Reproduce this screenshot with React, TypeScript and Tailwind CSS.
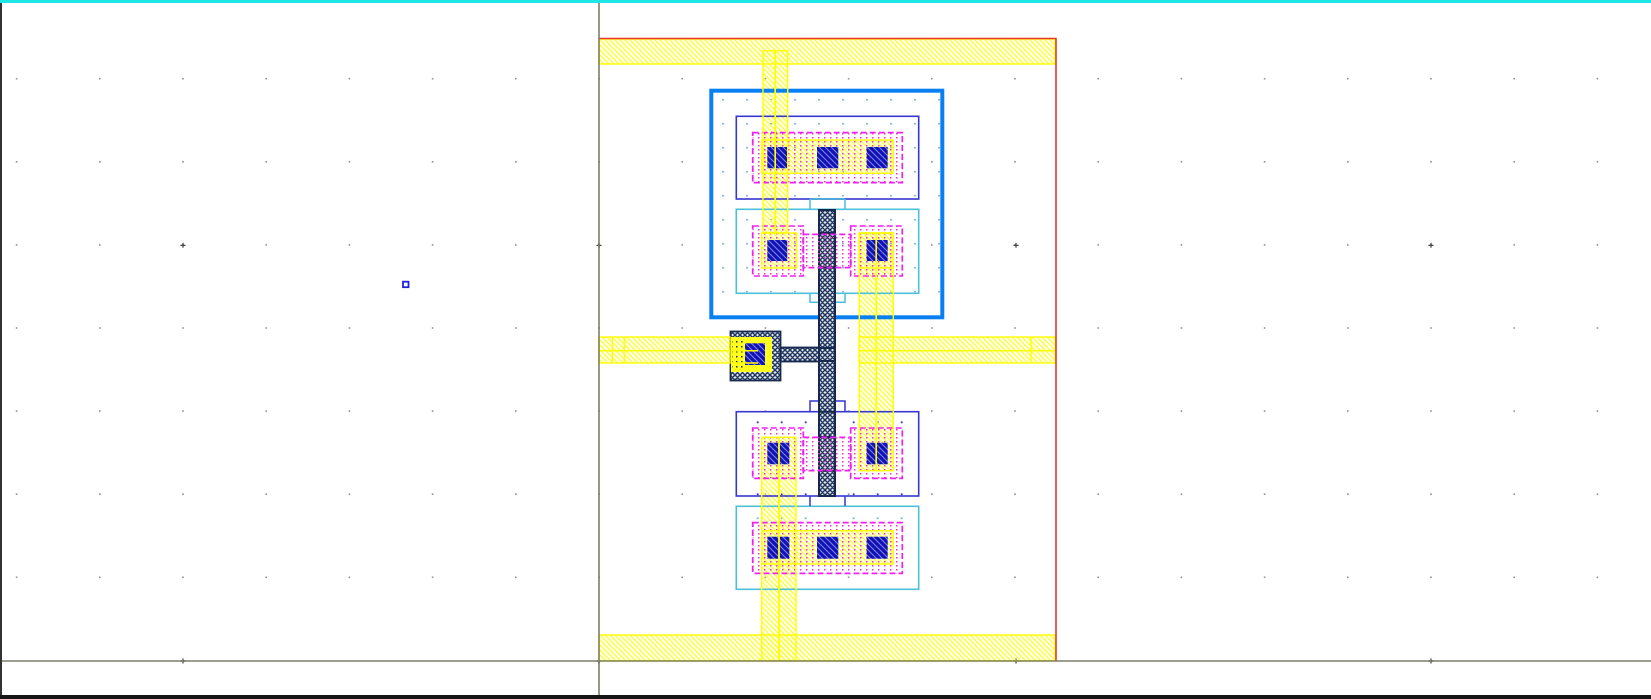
const gridXs = Array.from({ length: 20 }, (_, i) => 16.6 + i * 83.2);
const gridYs = Array.from({ length: 7 }, (_, i) => 78.7 + i * 83.1);
const crossXs = [183, 599, 1016, 1431];
const crossYs = [245.3, 661];

const wellXs = [723, 747, 771, 795, 819, 843, 867, 891, 915, 939];
const wellYs = [99.7, 123.7, 147.7, 171.7, 195.7, 219.7, 243.7, 267.7, 291.7];

type R = [number, number, number, number];

const contacts: R[] = [
  [767.3, 147, 20, 21.3],
  [817, 147, 21.3, 21.3],
  [866.7, 147, 21, 21.3],
  [767.3, 240, 20, 21],
  [866.7, 240, 21, 21],
  [767.3, 442.7, 22, 21.6],
  [866.7, 442.7, 21, 21.6],
  [767.3, 536.7, 22, 22],
  [817, 536.7, 21.3, 22],
  [866.7, 536.7, 21, 22],
];

const diffusion: R[] = [
  [752.7, 132.7, 149.6, 50],
  [752.7, 226, 50.6, 50],
  [850.7, 226, 51.6, 50],
  [803.3, 234.3, 47.4, 33.4],
  [752.7, 428, 50.6, 50.3],
  [850.7, 428, 51.6, 50.3],
  [803.3, 437.3, 47.4, 33.4],
  [752.7, 522.7, 149.6, 50.6],
];

const metal: R[] = [
  [599, 39, 456, 25],
  [599, 635, 456, 25.7],
  [599, 337, 131, 26],
  [859.3, 337, 196, 26],
  [763, 50.7, 12.3, 182],
  [775.3, 50.7, 12.4, 182],
  [859.3, 233, 17, 237.7],
  [876.3, 233, 17, 237.7],
  [761.7, 437.3, 17.3, 223.3],
  [779, 437.3, 17, 223.3],
  [761.7, 140, 131.6, 33.3],
  [761.7, 233, 35, 35],
  [859.3, 233, 34, 35],
  [761.7, 530.7, 131.6, 33.3],
];

function Box({ r, ...rest }: { r: R } & React.SVGProps<SVGRectElement>) {
  return <rect x={r[0]} y={r[1]} width={r[2]} height={r[3]} {...rest} />;
}

function Layout() {
  return (
    <svg width="1649" height="692" viewBox="2 3 1649 692" className="block blur-[0.4px]">
      <defs>
        <pattern id="metal" width="5" height="5" patternUnits="userSpaceOnUse">
          <path d="M-1 -1L6 6M-1 4L1 6M4 -1L6 1" stroke="#ffff30" strokeWidth="1.4" />
        </pattern>
        <pattern id="contact" width="6" height="6" patternUnits="userSpaceOnUse">
          <rect width="6" height="6" fill="#1212b4" />
          <path d="M-1 -1L7 7M-1 5L1 7M5 -1L7 1" stroke="#7a82e8" strokeWidth="1.1" />
        </pattern>
        <pattern id="diff" width="6" height="8" patternUnits="userSpaceOnUse">
          <rect x="2" y="1" width="1.5" height="1.5" fill="#f030c8" />
          <rect x="2" y="5" width="1.5" height="1.5" fill="#f030c8" />
        </pattern>
        <pattern id="blackDots" width="5" height="5" patternUnits="userSpaceOnUse">
          <rect x="1" y="1" width="1.5" height="1.5" fill="#2b2b30" />
        </pattern>
        <pattern id="poly" width="5" height="5" patternUnits="userSpaceOnUse">
          <rect width="5" height="5" fill="#e6e9ee" />
          <path d="M-1 -1L6 6M-1 4L1 6M4 -1L6 1M6 -1L-1 6M1 -1L-1 1M6 4L4 6" stroke="#22375f" strokeWidth="1.5" />
        </pattern>
      </defs>

      {/* grid */}
      {gridXs.map((x) =>
        gridYs.map((y) => <rect key={`${x}-${y}`} x={x - 0.8} y={y - 0.8} width="1.6" height="1.6" fill="#909090" />),
      )}
      {crossXs.map((x) =>
        crossYs.map((y) => (
          <path key={`${x}-${y}`} d={`M${x - 2.5} ${y}H${x + 2.5}M${x} ${y - 2.5}V${y + 2.5}`} stroke="#444" strokeWidth="1.2" />
        )),
      )}

      {/* well dots */}
      {wellXs.map((x) =>
        wellYs.map((y) => <rect key={`${x}-${y}`} x={x - 0.8} y={y - 0.8} width="1.6" height="1.6" fill="#6aa5e4" />),
      )}
      {[757.7, 781.7, 805.7, 853.7, 877.7, 901.7].map((x) => (
        <g key={x}>
          <rect x={x - 0.9} y="421.4" width="1.8" height="1.8" fill="#2f2fc8" />
          <rect x={x - 0.9} y="493.4" width="1.8" height="1.8" fill="#2f2fc8" />
          <rect x={x - 0.9} y="517.4" width="1.8" height="1.8" fill="#5cc4da" />
        </g>
      ))}

      {/* metal fill */}
      {metal.map((r) => (
        <Box key={r.join()} r={r} fill="url(#metal)" />
      ))}

      {/* well + active boxes */}
      <Box r={[711.3, 90.7, 231, 226.6]} fill="none" stroke="#0a7ff2" strokeWidth="4" />
      <Box r={[736.3, 116.3, 182.4, 82.7]} fill="none" stroke="#3636d2" strokeWidth="1.6" />
      <Box r={[736.3, 209.3, 182.4, 84]} fill="none" stroke="#4cc0d8" strokeWidth="1.6" />
      <Box r={[736.3, 411.7, 182.4, 84.3]} fill="none" stroke="#3636d2" strokeWidth="1.6" />
      <Box r={[736.3, 506.3, 182.4, 83]} fill="none" stroke="#4cc0d8" strokeWidth="1.6" />
      <path d="M810 199V209.3M845 199V209.3M810 199H845" fill="none" stroke="#4cc0d8" strokeWidth="1.5" />
      <path d="M810 293.3V302.3H845V293.3" fill="none" stroke="#4cc0d8" strokeWidth="1.5" />
      <path d="M810 411.7V401H845V411.7" fill="none" stroke="#3636d2" strokeWidth="1.5" />
      <path d="M810 496V506M845 496V506" fill="none" stroke="#3636d2" strokeWidth="1.5" />

      {/* poly */}
      <Box r={[730.5, 331.5, 50, 49]} fill="url(#poly)" stroke="#16284e" strokeWidth="1.8" />
      <Box r={[780.5, 347.5, 54, 14]} fill="url(#poly)" stroke="#16284e" strokeWidth="1.8" />
      <Box r={[819, 210, 16, 286]} fill="url(#poly)" stroke="#16284e" strokeWidth="2" />
      <path
        d="M819 233H835M819 267.5H835M819 437H835M819 470.7H835M819 348H835M819 361H835M819 411.7H835"
        stroke="#16284e"
        strokeWidth="2"
      />

      {/* gate contact */}
      <rect x="731" y="337" width="41" height="35" fill="#ffff20" />
      <rect x="732" y="338" width="13" height="33" fill="url(#blackDots)" />
      <rect x="745" y="343.3" width="20" height="21.7" fill="url(#contact)" />
      <path d="M732 350.7H758M732 363H758" stroke="#ffff00" strokeWidth="1.4" />

      {/* diffusion */}
      {diffusion.map((r) => (
        <g key={r.join()}>
          <Box r={r} fill="url(#diff)" />
          <Box r={r} fill="none" stroke="#ee22ee" strokeWidth="1.7" strokeDasharray="6 3" />
        </g>
      ))}

      {/* contacts */}
      {contacts.map((r) => (
        <Box key={r.join()} r={r} fill="url(#contact)" />
      ))}

      {/* metal outlines */}
      {metal.map((r) => (
        <Box key={r.join()} r={r} fill="none" stroke="#ffff00" strokeWidth="1.4" />
      ))}
      <path d="M612.3 337V363M624.3 337V363M1031 337V363M599 350.7H730M859.3 350.7H1055" stroke="#ffff00" strokeWidth="1.4" />

      {/* cell boundary */}
      <path d="M599 38.5H1056V661" fill="none" stroke="#e8362c" strokeWidth="1.6" />

      {/* axes */}
      <path d="M599 3V695M0 661H1651" fill="none" stroke="#7f7f6c" strokeWidth="1.6" />

      {/* cursor */}
      <rect x="403" y="281.7" width="5.5" height="5.5" fill="#fff" stroke="#2222dd" strokeWidth="1.8" />
    </svg>
  );
}

export default function App() {
  return (
    <div className="flex h-[699px] w-[1651px] flex-col overflow-hidden bg-white">
      <div className="h-[3px] shrink-0 bg-[#1ee6e6]" />
      <div className="flex flex-1">
        <div className="w-[2px] shrink-0 bg-[#333333]" />
        <Layout />
      </div>
      <div className="h-[4px] shrink-0 bg-[#161616]" />
    </div>
  );
}
